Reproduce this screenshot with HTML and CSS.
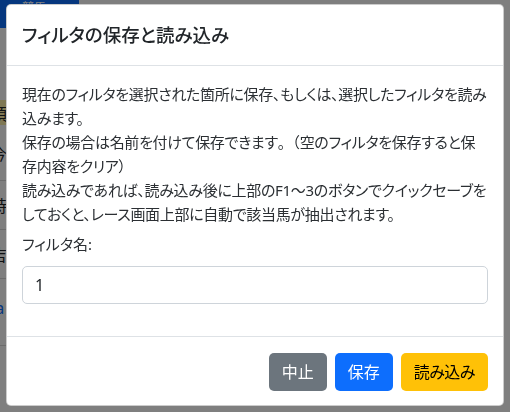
FILE: index.html
```html
<!DOCTYPE html>
<html lang="ja">
<head>
  <meta charset="UTF-8">
  <title>フィルタの保存と読み込み</title>
  <meta name="viewport" content="width=device-width, initial-scale=1.0">
  <link rel="stylesheet" href="styles.css">
</head>
<body>
<div id="page">
  <div class="nav-brand">競馬</div>
  <table class="race-table">
    <tr class="head"><td>項目</td></tr>
    <tr class="first"><td>今日</td></tr>
    <tr><td>時刻</td></tr>
    <tr><td>吉田</td></tr>
    <tr><td class="link">ia</td></tr>
  </table>
</div>

<div class="backdrop"></div>

<div class="modal">
  <div class="modal-dialog">
    <div class="modal-header">
      <h5 class="modal-title">フィルタの保存と読み込み</h5>
    </div>
    <div class="modal-body">
      <p class="note">現在のフィルタを選択された箇所に保存、もしくは、選択したフィルタを読み込みます。<br>保存の場合は名前を付けて保存できます<span class="full">。（</span>空のフィルタを保存すると保存内容をクリア）<br>読み込みであれば、読み込み後に上部のF1～3のボタンでクイックセーブをしておくと、レース画面上部に自動で該当馬が抽出されます。</p>
      <div class="field">
        <label for="filterName" class="form-label">フィルタ名:</label>
        <input type="text" id="filterName" class="form-control" value="1">
      </div>
    </div>
    <div class="modal-footer">
      <button class="btn btn-secondary">中止</button>
      <button class="btn btn-primary">保存</button>
      <button class="btn btn-warning">読み込み</button>
    </div>
  </div>
</div>
</body>
</html>
```

FILE: styles.css
```css
body, html {
  margin: 0;
  padding: 0;
  height: 100%;
  font-family: "Noto Sans", "Noto Sans CJK JP", sans-serif;
  font-feature-settings: "palt";
  background-color: #fff;
  color: #212529;
  overflow: hidden;
}
#page {
  height: 100%;
}
.nav-brand {
  width: 79px;
  height: 28px;
  background: #0d6efd;
  color: #fff;
  font-size: 12px;
  line-height: 16px;
  padding-left: 22px;
  box-sizing: border-box;
}
.race-table {
  margin-top: 72px;
  margin-left: -9px;
  border-collapse: collapse;
  width: 200px;
  font-size: 16px;
}
.race-table td {
  border-bottom: 1px solid #d8d8d8;
  height: 48px;
  padding: 0;
}
.race-table .head td {
  background: #fff0a8;
  height: 25px;
  border-bottom: none;
}
.race-table .first td {
  height: 55px;
}
.race-table .link {
  color: #0d6efd;
  vertical-align: top;
  padding-top: 18px;
}
.backdrop {
  position: fixed;
  inset: 0;
  background: rgba(0, 0, 0, 0.5);
}
.modal {
  position: fixed;
  inset: 0;
  padding: 4px 6px;
}
.modal-dialog {
  background: #fff;
  border: 1px solid rgba(0, 0, 0, 0.2);
  border-radius: 5px;
  box-sizing: border-box;
  height: 402px;
  display: flex;
  flex-direction: column;
}
.modal-header {
  padding: 15px 15px;
  border-bottom: 1px solid #dee2e6;
}
.modal-title {
  margin: 0;
  font-size: 18.5px;
  font-weight: 500;
  line-height: 30px;
}
.modal-body {
  padding: 16px 15px;
  flex: 1;
  font-size: 15px;
  line-height: 24px;
}
.note {
  margin: 0 0 6px 0;
  letter-spacing: -0.3px;
  color: #2b2f33;
}
.full {
  font-feature-settings: normal;
}
.field {
  margin-bottom: 16px;
}
.form-label {
  display: block;
  margin-bottom: 10px;
  color: #2b2f33;
}
.form-control {
  display: block;
  width: 100%;
  box-sizing: border-box;
  height: 38px;
  padding: 6px 12px;
  font-family: inherit;
  font-size: 16px;
  color: #212529;
  border: 1px solid #ced4da;
  border-radius: 5px;
  outline: none;
}
.modal-footer {
  display: flex;
  justify-content: flex-end;
  padding: 12px 11px;
  border-top: 1px solid #dee2e6;
}
.btn {
  margin: 4px;
  height: 38px;
  padding: 6px 12px;
  font-family: inherit;
  font-feature-settings: "palt";
  font-size: 16px;
  line-height: 24px;
  border: 1px solid transparent;
  border-radius: 5px;
  cursor: pointer;
}
.btn-secondary {
  background: #6c757d;
  color: #fff;
}
.btn-primary {
  background: #0d6efd;
  color: #fff;
}
.btn-warning {
  background: #ffc107;
  color: #000;
  letter-spacing: -0.5px;
}
```
